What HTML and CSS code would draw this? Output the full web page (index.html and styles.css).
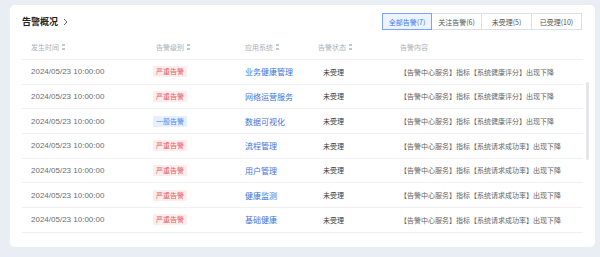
FILE: index.html
```html
<!DOCTYPE html>
<html lang="zh-CN">
<head>
  <meta charset="UTF-8" />
  <title>告警概况</title>
  <link rel="stylesheet" href="styles.css">
</head>
<body>
  <div class="card">
    <div class="toolbar">
      <div class="title">告警概况
        <svg class="chev" width="5" height="8" viewBox="0 0 5 8"><polyline points="1,1 4,4 1,7" fill="none" stroke="#666" stroke-width="1"/></svg>
      </div>
      <div class="tabs">
        <span class="tab active">全部告警(7)</span>
        <span class="tab">关注告警(6)</span>
        <span class="tab">未受理(5)</span>
        <span class="tab">已受理(10)</span>
      </div>
    </div>

    <div class="table">
      <div class="row head">
        <div class="cell">发生时间 <i class="sort"></i></div>
        <div class="cell c-level">告警级别 <i class="sort"></i></div>
        <div class="cell">应用系统 <i class="sort"></i></div>
        <div class="cell">告警状态 <i class="sort"></i></div>
        <div class="cell">告警内容</div>
      </div>
      <div id="rows"></div>
    </div>
    <div class="scroll-thumb"></div>
  </div>

  <script>
    const alarms = [
      { level: "严重告警", type: "high", app: "业务健康管理", metric: "系统健康评分" },
      { level: "严重告警", type: "high", app: "网络运营服务", metric: "系统健康评分" },
      { level: "一般告警", type: "normal", app: "数据可视化", metric: "系统健康评分" },
      { level: "严重告警", type: "high", app: "流程管理", metric: "系统请求成功率" },
      { level: "严重告警", type: "high", app: "用户管理", metric: "系统请求成功率" },
      { level: "严重告警", type: "high", app: "健康监测", metric: "系统请求成功率" },
      { level: "严重告警", type: "high", app: "基础健康", metric: "系统请求成功率" }
    ];

    const rowsDiv = document.getElementById("rows");
    alarms.forEach(a => {
      const div = document.createElement("div");
      div.className = "row";
      div.innerHTML = `
        <div class="cell date">2024/05/23 10:00:00</div>
        <div class="cell"><span class="tag ${a.type}">${a.level}</span></div>
        <div class="cell app">${a.app}</div>
        <div class="cell status">未受理</div>
        <div class="cell content">【告警中心服务】指标【${a.metric}】出现下降</div>
      `;
      rowsDiv.appendChild(div);
    });
  </script>
</body>
</html>
```

FILE: styles.css
```css
body {
  margin: 0;
  background: #e9edf4;
  font-family: "Noto Sans CJK SC", "Liberation Sans", sans-serif;
  color: #333;
  width: 600px;
  height: 257px;
  overflow: hidden;
}
.card {
  position: relative;
  margin: 5px 5px 0 10px;
  height: 242px;
  box-sizing: border-box;
  background: #fff;
  border-radius: 5px;
  padding: 8px 12px 0 12px;
}
.toolbar {
  display: flex;
  justify-content: space-between;
  align-items: center;
  height: 17px;
}
.title {
  display: flex;
  align-items: center;
  gap: 5px;
  font-size: 9px;
  font-weight: bold;
  color: #222;
}
.tabs {
  display: flex;
  margin-right: 1px;
}
.tab {
  display: flex;
  align-items: center;
  justify-content: center;
  height: 17px;
  box-sizing: border-box;
  width: 51px;
  border: 1px solid #dcdfe6;
  margin-left: -1px;
  font-size: 7px;
  color: #555;
}
.tab.active {
  width: 50px;
  border-color: #7ba3f5;
  background: #eef4ff;
  color: #3b7bf0;
  position: relative;
  z-index: 1;
}
.table {
  margin-top: 4px;
}
.row {
  display: grid;
  grid-template-columns: 122px 92px 73px 82px 1fr;
  align-items: center;
  height: 24.67px;
  box-sizing: border-box;
  border-bottom: 1px solid #eef0f3;
}
.row.head {
  height: 26px;
  font-size: 7px;
  color: #adb0b5;
}
.cell {
  padding-left: 9px;
  white-space: nowrap;
  display: flex;
  align-items: center;
}
.head .c-level {
  padding-left: 12px;
}
.sort {
  display: inline-block;
  width: 3px;
  height: 6px;
  margin-left: 3px;
  background:
    linear-gradient(to bottom, #c4c7cc 0 2px, transparent 2px 4px, #c4c7cc 4px 6px);
}
.date {
  font-family: "Liberation Sans", sans-serif;
  font-size: 8px;
  color: #6b6e73;
}
.tag {
  font-size: 7px;
  padding: 1px 3px;
  line-height: 9px;
  border-radius: 1px;
}
.tag.high {
  background: #fdeeed;
  color: #ea5a5e;
}
.tag.normal {
  background: #e8f0ff;
  color: #4a86f0;
}
.app {
  font-size: 8px;
  color: #3f74dc;
}
.status {
  padding-left: 14px;
  font-size: 7px;
  color: #3a3a3a;
}
.content {
  font-size: 7px;
  color: #666;
}
.scroll-thumb {
  position: absolute;
  left: 576px;
  top: 77px;
  width: 3px;
  height: 78px;
  border-radius: 2px;
  background: #e4e6ea;
}
```
